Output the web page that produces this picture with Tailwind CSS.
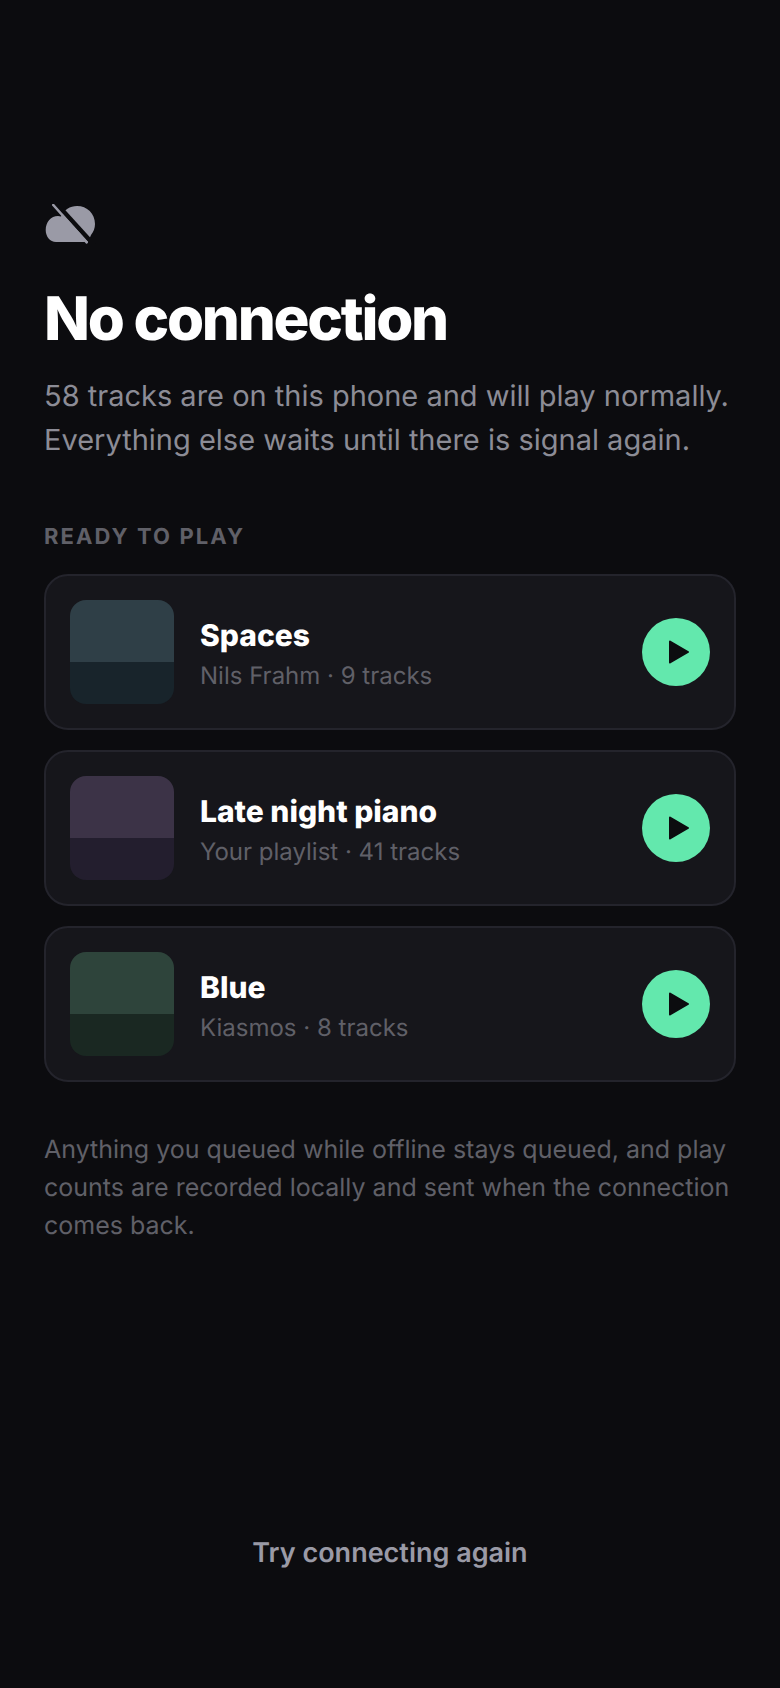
<!DOCTYPE html>
<html><head><meta charset="utf-8"><script src="https://cdn.jsdelivr.net/npm/@tailwindcss/browser@4"></script></head>
<body class="bg-[#0c0c0f] font-['Inter',sans-serif] [text-rendering:geometricPrecision]">
<main class="w-[780px] h-[1688px] flex flex-col px-[44px] pt-[204px] bg-[#0c0c0f]">
<svg class="w-[52px] h-[40px] text-[#9a9aa6]" viewBox="0 0 52 40"><path fill="currentColor" d="M12 38 C6 38 1.7 32.5 1.7 26 C1.7 18 7 12 14 12 C15 12 16 12.2 17 12.5 C20 6 26 2 33 2 C43 2 51 9.5 51 20 C51 24 49.5 28 47 31 L44 38 Z"/><path d="M11.7 -1.1 L50 41" stroke="#0c0c0f" stroke-width="4.5"/><path d="M9.3 1 L42.7 38.3" stroke="currentColor" stroke-width="2.6" stroke-linecap="round"/></svg>
<h1 class="mt-[37px] text-[60px] leading-[76px] font-extrabold tracking-[-0.0375em] text-white">No connection</h1>
<p class="mt-[17px] text-[29px] leading-[44px] text-[#8c8c96]">58 tracks are on this phone and will play normally. Everything else waits until there is signal again.</p>
<h2 class="mt-[59px] text-[22px] leading-[32px] font-bold tracking-[0.095em] text-[#606068]">READY TO PLAY</h2>
<div class="mt-[21px] flex flex-col gap-[20px]">
<div class="h-[156px] flex items-center gap-[26px] px-[24px] rounded-[24px] border-2 border-[#24242c] bg-[#16161b]">
<div class="w-[104px] h-[104px] shrink-0 rounded-[16px] overflow-hidden flex flex-col"><div class="h-[62px] bg-[#2f3f47]"></div><div class="flex-1 bg-[#18242b]"></div></div>
<div class="flex-1 pt-[4px]"><div class="text-[30px] leading-[44px] font-extrabold text-white">Spaces</div><div class="text-[24px] leading-[36px] text-[#606068]">Nils Frahm · 9 tracks</div></div>
<button class="w-[68px] h-[68px] rounded-full bg-[#63e8ad] flex items-center justify-center"><svg class="w-[28px] h-[28px]" viewBox="0 0 28 28"><path fill="#0c0c0f" stroke="#0c0c0f" stroke-width="2" stroke-linejoin="round" d="M8 3.5 L26 14 L8 24.5 Z"/></svg></button>
</div>
<div class="h-[156px] flex items-center gap-[26px] px-[24px] rounded-[24px] border-2 border-[#24242c] bg-[#16161b]">
<div class="w-[104px] h-[104px] shrink-0 rounded-[16px] overflow-hidden flex flex-col"><div class="h-[62px] bg-[#3c3347]"></div><div class="flex-1 bg-[#231e2e]"></div></div>
<div class="flex-1 pt-[4px]"><div class="text-[30px] leading-[44px] font-extrabold text-white">Late night piano</div><div class="text-[24px] leading-[36px] text-[#606068]">Your playlist · 41 tracks</div></div>
<button class="w-[68px] h-[68px] rounded-full bg-[#63e8ad] flex items-center justify-center"><svg class="w-[28px] h-[28px]" viewBox="0 0 28 28"><path fill="#0c0c0f" stroke="#0c0c0f" stroke-width="2" stroke-linejoin="round" d="M8 3.5 L26 14 L8 24.5 Z"/></svg></button>
</div>
<div class="h-[156px] flex items-center gap-[26px] px-[24px] rounded-[24px] border-2 border-[#24242c] bg-[#16161b]">
<div class="w-[104px] h-[104px] shrink-0 rounded-[16px] overflow-hidden flex flex-col"><div class="h-[62px] bg-[#2e443b]"></div><div class="flex-1 bg-[#1a2822]"></div></div>
<div class="flex-1 pt-[4px]"><div class="text-[30px] leading-[44px] font-extrabold text-white">Blue</div><div class="text-[24px] leading-[36px] text-[#606068]">Kiasmos · 8 tracks</div></div>
<button class="w-[68px] h-[68px] rounded-full bg-[#63e8ad] flex items-center justify-center"><svg class="w-[28px] h-[28px]" viewBox="0 0 28 28"><path fill="#0c0c0f" stroke="#0c0c0f" stroke-width="2" stroke-linejoin="round" d="M8 3.5 L26 14 L8 24.5 Z"/></svg></button>
</div>
</div>
<p class="mt-[49px] text-[25px] leading-[38px] text-[#606068]">Anything you queued while offline stays queued, and play counts are recorded locally and sent when the connection comes back.</p>
<div class="mt-auto mb-[115px] text-center text-[27px] leading-[40px] font-semibold text-[#9a9aa6]">Try connecting again</div>
</main>
</body></html>
